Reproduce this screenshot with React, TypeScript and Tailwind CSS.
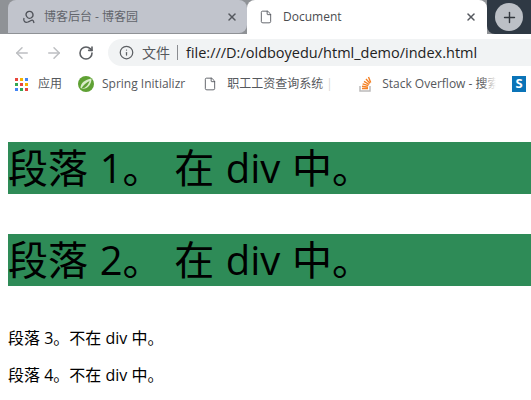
import { ArrowLeft, ArrowRight, RotateCw, Info, X, File, Plus } from "lucide-react";

const font = "font-['Open_Sans','Noto_Sans_CJK_SC',sans-serif]";

function AppsIcon() {
    const colors = ["#e8453c", "#f4b400", "#4285f4", "#34a853", "#e8453c", "#f4b400", "#4285f4", "#34a853", "#e8453c"];
    return (
        <div className="grid grid-cols-3 gap-[2px] w-[13px] h-[13px] shrink-0">
            {colors.map((c, i) => (
                <span key={i} className="w-[3px] h-[3px]" style={{ backgroundColor: c }} />
            ))}
        </div>
    );
}

function SpringIcon() {
    return (
        <svg width="16" height="16" viewBox="0 0 16 16" className="shrink-0">
            <circle cx="8" cy="8" r="8" fill="#5fa134" />
            <path d="M2.5 12C2.5 7 7 3.5 13.5 2.5C13.5 9 9 13.5 4 12.5" fill="#d9ecc9" />
            <path d="M3.5 12.5C5 9 8 7 11.5 5C10.5 9 7 12.5 3.5 12.5Z" fill="#5fa134" />
        </svg>
    );
}

function StackIcon() {
    return (
        <svg width="16" height="18" viewBox="0 0 16 18" className="shrink-0">
            <path d="M2 11v5h10v-5" fill="none" stroke="#bcbbbb" strokeWidth="1.5" />
            <path d="M4 13.5h6M4 11.3l6 .8M4.6 8.8l5.8 1.9M6 6.3l5.2 3.2M8 4l4 4.4M10.5 2l2.2 5.4" stroke="#f48024" strokeWidth="1.4" fill="none" />
        </svg>
    );
}

export default function App() {
    return (
        <div className={`${font} w-[531px] h-[400px] overflow-hidden bg-white text-black`}>
            {/* Tab strip */}
            <div className="flex h-[34px] bg-[#8f9296]">
                <div className="w-[8px]" />
                <div className="flex items-center w-[239px] h-[33px] pl-[13px] pr-[9px] bg-[#c1c4cc] rounded-t-lg rounded-br-lg">
                    <svg width="16" height="16" viewBox="0 0 16 16" className="shrink-0">
                        <path d="M3 9C2 12 4 14 7 13C10 12 12 9 13 14M5 6a3.5 3.5 0 1 1 5 3C8 10 6 9 5 6Z" fill="none" stroke="#50535a" strokeWidth="1.3" />
                    </svg>
                    <span className="ml-[7px] text-[12px] text-[#62656b] truncate">博客后台 - 博客园</span>
                    <X size={12} strokeWidth={3} className="ml-auto text-[#55585e]" />
                </div>
                <div className="flex items-center w-[240px] h-[34px] pl-[12px] pr-[10px] bg-white rounded-t-lg">
                    <File size={14} strokeWidth={1.5} className="text-[#50535a]" />
                    <span className="ml-[10px] text-[12px] text-[#4a4c50]">Document</span>
                    <X size={12} strokeWidth={3} className="ml-auto text-[#55585e]" />
                </div>
                <div className="flex-1 flex items-center justify-center bg-[#2f3944] rounded-bl-lg">
                    <div className="flex items-center justify-center w-[28px] h-[28px] rounded-full bg-[#bcc0c6]">
                        <Plus size={17} strokeWidth={2} className="text-[#33383f]" />
                    </div>
                </div>
            </div>

            {/* Toolbar */}
            <div className="flex items-center h-[34px] pt-[3px] bg-white">
                <ArrowLeft size={18} strokeWidth={2} className="ml-[13px] text-[#bdbfc2]" />
                <ArrowRight size={18} strokeWidth={2} className="ml-[14px] text-[#bdbfc2]" />
                <RotateCw size={16} strokeWidth={2.4} className="ml-[15px] text-[#5c5f63]" />
                <div className="flex items-center flex-1 h-[27px] ml-[14px] pl-[11px] bg-[#f1f3f4] rounded-l-full">
                    <Info size={15} strokeWidth={2} className="text-[#5c5f63]" />
                    <span className="ml-[8px] text-[14px] text-[#55585c]">文件</span>
                    <span className="w-px h-[15px] ml-[7px] bg-[#8a8c90]" />
                    <span className="ml-[8px] text-[14.5px] text-[#222]">file:///D:/oldboyedu/html_demo/index.html</span>
                </div>
            </div>

            {/* Bookmarks */}
            <div className="flex items-center h-[32px] pl-[15px] text-[12px] text-[#55585c] whitespace-nowrap overflow-hidden">
                <AppsIcon />
                <span className="ml-[10px]">应用</span>
                <span className="ml-[16px]"><SpringIcon /></span>
                <span className="ml-[8px]">Spring Initializr</span>
                <File size={14} strokeWidth={1.5} className="ml-[18px] shrink-0 text-[#50535a]" />
                <span className="relative ml-[10px] w-[106px] overflow-hidden">
                    职工工资查询系统 | 查
                    <span className="absolute inset-y-0 right-0 w-[14px] bg-gradient-to-r from-transparent to-white" />
                </span>
                <span className="ml-[25px]"><StackIcon /></span>
                <span className="relative ml-[8px] w-[114px] overflow-hidden">
                    Stack Overflow - 搜索
                    <span className="absolute inset-y-0 right-0 w-[14px] bg-gradient-to-r from-transparent to-white" />
                </span>
                <span className="ml-[16px] flex items-center justify-center w-[14px] h-[16px] shrink-0 bg-[#0b74b8] text-white text-[13px] font-bold">S</span>
            </div>

            {/* Page content */}
            <div className="pl-[8px] pt-[42px]">
                <div className="h-[52px] leading-[52px] text-[40px] bg-[#2e8b57] whitespace-nowrap [word-spacing:1.25px]">段落 1。 在 div 中。</div>
                <div className="h-[52px] mt-[40px] leading-[52px] text-[40px] bg-[#2e8b57] whitespace-nowrap [word-spacing:1.25px]">段落 2。 在 div 中。</div>
                <p className="mt-[40px] text-[16px] leading-[24px]">段落 3。不在 div 中。</p>
                <p className="mt-[13px] text-[16px] leading-[24px]">段落 4。不在 div 中。</p>
            </div>
        </div>
    );
}
